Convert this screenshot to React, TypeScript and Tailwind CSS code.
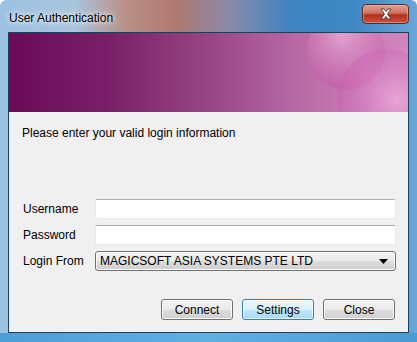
import React from 'react';

const font = { fontFamily: '"Liberation Sans", Arial, sans-serif' };

const WinButton = ({ label, focused }: { label: string; focused?: boolean }) => (
  <button
    className={`w-[72px] h-[21px] rounded-[3px] border text-[12px] text-black leading-none ${
      focused
        ? 'border-[#3c7fb1] bg-[linear-gradient(to_bottom,#eaf6fd_0%,#d9f0fc_50%,#bee6fd_51%,#a7d9f5_100%)] shadow-[inset_0_0_0_1px_#ffffffaa]'
        : 'border-[#707070] bg-[linear-gradient(to_bottom,#f2f2f2_0%,#ebebeb_50%,#dddddd_51%,#cfcfcf_100%)] shadow-[inset_0_0_0_1px_#fcfcfc]'
    }`}
  >
    {label}
  </button>
);

const Field = ({ label, children }: { label: string; children: React.ReactNode }) => (
  <div className="flex items-center h-[20px]">
    <div className="w-[86px] pl-[14px] text-[12px] text-black shrink-0 whitespace-nowrap">{label}</div>
    {children}
  </div>
);

export default function App() {
  return (
    <div
      className="w-[417px] h-[342px] overflow-hidden flex flex-col rounded-t-[6px] bg-[linear-gradient(90deg,#9cc2e2_0%,#a9c4dc_18%,#b99086_30%,#b07870_42%,#8a8aa8_55%,#3d84c2_70%,#3f88c4_85%,#6aa6d6_100%)]"
      style={font}
    >
      {/* title bar */}
      <div className="relative h-[32px] shrink-0">
        <div className="absolute left-[9px] top-[9px] text-[12px] text-black [text-shadow:0_0_8px_#ffffff,0_0_4px_#ffffff]">
          User Authentication
        </div>
        <div className="absolute left-[362px] top-[4px] w-[47px] h-[20px] rounded-[4px] border border-[#5c2a24] bg-[linear-gradient(to_bottom,#e6a096_0%,#d0705f_45%,#b3301e_55%,#c8553f_100%)] shadow-[inset_0_0_0_1px_#f0b8ae80] flex items-center justify-center">
          <svg width="14" height="12" viewBox="0 0 14 12">
            <path
              d="M2 1 L5 1 L7 3.5 L9 1 L12 1 L8.5 6 L12 11 L9 11 L7 8.5 L5 11 L2 11 L5.5 6 Z"
              fill="#ffffff"
              stroke="#3a2a2a"
              strokeWidth="0.8"
              strokeLinejoin="round"
            />
          </svg>
        </div>
      </div>

      {/* client area */}
      <div className="ml-[8px] w-[401px] h-[301px] border border-[#1d3f5c] bg-[#f0f0f0] flex flex-col shrink-0">
        <div className="relative h-[79px] shrink-0 overflow-hidden bg-[linear-gradient(90deg,#6a0a58_0%,#7a2068_25%,#974684_50%,#b466a2_70%,#c87cb4_88%,#d286c0_100%)]">
          <svg className="absolute left-0 top-0" width="399" height="79">
            <defs>
              <radialGradient id="c1" cx="0.45" cy="0.3" r="0.65">
                <stop offset="0%" stopColor="#ecb4da" stopOpacity="0.7" />
                <stop offset="100%" stopColor="#c45aa8" stopOpacity="0.45" />
              </radialGradient>
              <radialGradient id="c2" cx="0.6" cy="0.5" r="0.6">
                <stop offset="0%" stopColor="#f0b4de" stopOpacity="0.7" />
                <stop offset="100%" stopColor="#c85cb0" stopOpacity="0.4" />
              </radialGradient>
            </defs>
            <circle cx="337" cy="18" r="39" fill="url(#c1)" />
            <circle cx="378" cy="66" r="50" fill="url(#c2)" />
          </svg>
        </div>

        <div className="pl-[13px] mt-[13px] text-[12px] leading-[16px] text-black">Please enter your valid login information</div>

        <div className="flex flex-col gap-[6px] mt-[58px]">
          <Field label="Username">
            <div className="w-[301px] h-[20px] bg-white border border-[#e3e9ef] border-t-[#abadb3] rounded-[2px]" />
          </Field>
          <Field label="Password">
            <div className="w-[301px] h-[20px] bg-white border border-[#e3e9ef] border-t-[#abadb3] rounded-[2px]" />
          </Field>
          <Field label="Login From">
            <div className="w-[301px] h-[20px] rounded-[3px] border border-[#707070] bg-[linear-gradient(to_bottom,#f2f2f2_0%,#ebebeb_50%,#dddddd_51%,#cfcfcf_100%)] shadow-[inset_0_0_0_1px_#fcfcfc] flex items-center justify-between pl-[4px] pr-[7px]">
              <span className="text-[12px] text-black">MAGICSOFT ASIA SYSTEMS PTE LTD</span>
              <svg width="9" height="5" viewBox="0 0 9 5">
                <path d="M0 0 L9 0 L4.5 5 Z" fill="#000" />
              </svg>
            </div>
          </Field>
        </div>

        <div className="flex justify-end gap-[9px] pr-[13px] mt-[28px]">
          <WinButton label="Connect" />
          <WinButton label="Settings" focused />
          <WinButton label="Close" />
        </div>
      </div>

      <div className="flex-1 bg-[linear-gradient(90deg,#4d9ed6,#62b0e2_50%,#4a9ad4)]" />
    </div>
  );
}
